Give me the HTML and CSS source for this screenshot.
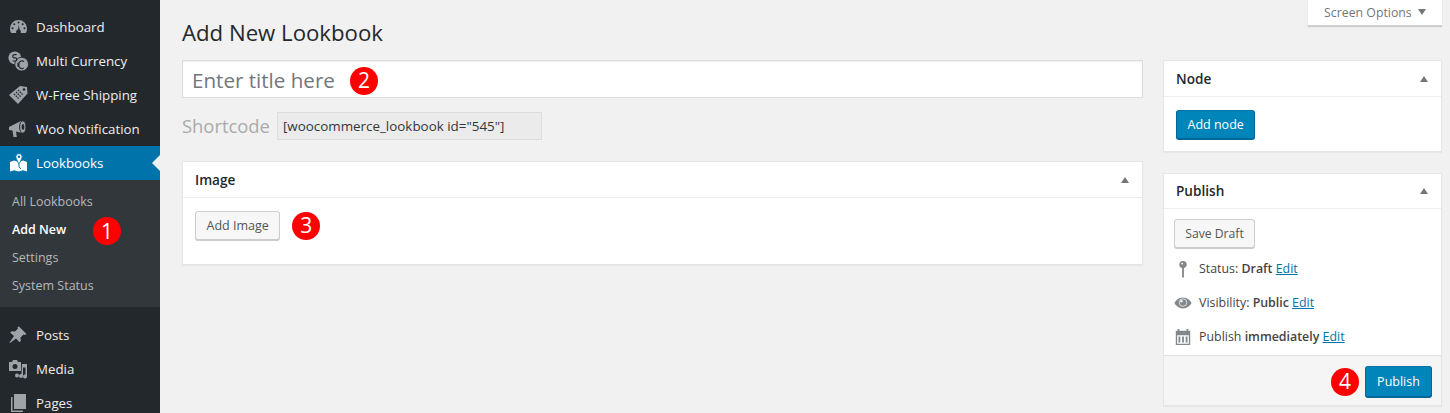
FILE: index.html
```html
<!DOCTYPE html>
<html lang="en">
<head>
    <meta charset="UTF-8">
    <title>Add New Lookbook</title>
    <link rel="stylesheet" href="styles.css">
</head>
<body>
    <div class="layout">
        <!-- Admin menu -->
        <nav class="sidebar">
            <ul class="menu">
                <li class="menu-item">
                    <svg class="menu-icon" viewBox="0 0 20 20"><path d="M10.500 3A8.500 8.500 0 0 0 2 11.500c0 1.700.4 3.200 1.200 4.500h14.600c.8-1.300 1.200-2.800 1.200-4.500A8.500 8.500 0 0 0 10.500 3z"/><g fill="#23282d"><circle cx="10.500" cy="5.500" r="1"/><circle cx="6.300" cy="7.200" r="1"/><circle cx="14.700" cy="7.200" r="1"/><circle cx="4.500" cy="11.300" r="1"/><circle cx="16.500" cy="11.300" r="1"/><circle cx="10.500" cy="14.500" r="2.200"/><path d="M10.800 7.500l1 7h-2z"/><path d="M8.300 14.500h4.400V16H8.300z"/></g></svg>
                    Dashboard
                </li>
                <li class="menu-item menu-item-wide">
                    <svg class="menu-icon menu-icon-wide" viewBox="0 0 24 24"><circle cx="8.500" cy="8.500" r="7"/><circle cx="16" cy="15.500" r="7.500" stroke="#23282d" stroke-width="1"/><path d="M18.500 12.500a3.500 3.500 0 0 0-5.500 2h-1v1h1v1h-1v1h1a3.500 3.500 0 0 0 5.500 2" fill="none" stroke="#23282d" stroke-width="1.300"/><path d="M10.500 5H8a1.500 1.500 0 0 0 0 3.500h1A1.500 1.500 0 0 1 9 12H6" fill="none" stroke="#23282d" stroke-width="1.300"/></svg>
                    Multi Currency
                </li>
                <li class="menu-item">
                    <svg class="menu-icon" viewBox="0 0 20 20"><path d="M12 1l7 1 .5 6.500-9.500 10.500L1 10z"/><path d="M6 9l5 5M8 7l5 5M10 5l5 5" stroke="#23282d" stroke-width="1.300" stroke-dasharray="1.500 1"/><circle cx="16" cy="4.500" r="1.300" fill="#23282d"/></svg>
                    W-Free Shipping
                </li>
                <li class="menu-item">
                    <svg class="menu-icon" viewBox="0 0 20 20"><path d="M1 8l12-6 1.500 12L8 12.500l.8 5.500H5.500l-1-6.500L1 11z"/><ellipse cx="14.800" cy="8" rx="3.200" ry="6.200" stroke="#23282d"/><ellipse cx="15" cy="8" rx="1.400" ry="3" fill="#23282d"/></svg>
                    Woo Notification
                </li>
                <li class="menu-item menu-item-current">
                    <svg class="menu-icon menu-icon-light" viewBox="0 0 20 20"><path d="M2 9l4-1.500 5 1.500 4-1.500 4 1.500v9.500l-4-1.200-4.500 1.200-4.500-1.200-4 1.200z"/><path d="M11 .5a3.200 3.200 0 0 0-3.200 3.200c0 2 3.200 7.300 3.200 7.300s3.200-5.300 3.200-7.300A3.200 3.200 0 0 0 11 .5z" stroke="#0073aa"/><circle cx="11" cy="3.700" r="1.200" fill="#0073aa"/><path d="M11 11v3l2 2" fill="none" stroke="#0073aa"/></svg>
                    Lookbooks
                </li>
                <li class="submenu-wrap">
                    <ul class="submenu">
                        <li class="submenu-item">All Lookbooks</li>
                        <li class="submenu-item submenu-item-current">Add New <span class="marker marker-menu">1</span></li>
                        <li class="submenu-item">Settings</li>
                        <li class="submenu-item">System Status</li>
                    </ul>
                </li>
                <li class="menu-item">
                    <svg class="menu-icon" viewBox="0 0 20 20"><path d="M11 1.500l7.500 7.500-1.500 1-1.500-.5-3 3 .3 3.500-1.300 1.300-3.500-3.800L2 18l-.5-.5 4.500-6.500-3.800-3.500L3.500 6.200l3.500.3 3-3L9.500 2z"/></svg>
                    Posts
                </li>
                <li class="menu-item">
                    <svg class="menu-icon" viewBox="0 0 20 20"><path d="M1 3h3l1-2h4l1 2h3v9H1zm6 2a2.500 2.500 0 1 0 0 5 2.500 2.500 0 0 0 0-5z" fill-rule="evenodd"/><path d="M14 5h5v12.500a2 2 0 1 1-1.500-2V8.500H15V17a2 2 0 1 1-1.500-2z"/><circle cx="9" cy="16.500" r="2"/></svg>
                    Media
                </li>
                <li class="menu-item">
                    <svg class="menu-icon" viewBox="0 0 20 20"><path d="M6 1h12v15H6z"/><path d="M3 4h1.500v13.500H15V19H3z"/></svg>
                    Pages
                </li>
            </ul>
        </nav>

        <main class="content">
            <button class="screen-options">Screen Options <span class="arrow-down"></span></button>
            <h1 class="page-title">Add New Lookbook</h1>

            <div class="columns">
                <div class="column-main">
                    <div class="title-field">
                        <span class="title-placeholder">Enter title here</span>
                        <span class="marker">2</span>
                    </div>
                    <div class="shortcode-row">
                        <span class="shortcode-label">Shortcode</span>
                        <div class="shortcode-input">[woocommerce_lookbook id="545"]</div>
                    </div>
                    <section class="box box-image">
                        <header class="box-header">
                            <h2 class="box-title">Image</h2>
                            <span class="arrow-up"></span>
                        </header>
                        <div class="box-body image-body">
                            <button class="button">Add Image</button>
                            <span class="marker">3</span>
                        </div>
                    </section>
                </div>

                <aside class="column-side">
                    <section class="box">
                        <header class="box-header">
                            <h2 class="box-title">Node</h2>
                            <span class="arrow-up"></span>
                        </header>
                        <div class="box-body node-body">
                            <button class="button button-primary">Add node</button>
                        </div>
                    </section>

                    <section class="box box-publish">
                        <header class="box-header">
                            <h2 class="box-title">Publish</h2>
                            <span class="arrow-up"></span>
                        </header>
                        <div class="publish-body">
                            <button class="button button-draft">Save Draft</button>
                            <div class="publish-row publish-row-first">
                                <svg class="publish-icon" viewBox="0 0 20 20"><path d="M10 1a4 4 0 0 0-1 7.900V19l1 1 1-1V8.900A4 4 0 0 0 10 1zM9 3a1 1 0 1 1 0 2 1 1 0 0 1 0-2z" fill-rule="evenodd"/></svg>
                                <span>Status: <b>Draft</b> <a class="edit-link">Edit</a></span>
                            </div>
                            <div class="publish-row">
                                <svg class="publish-icon publish-icon-eye" viewBox="0 0 20 20"><path d="M10 4C5.500 4 2 7.200.5 10 2 12.800 5.500 16 10 16s8-3.200 9.500-6C18 7.200 14.500 4 10 4z"/><circle cx="10" cy="9.500" r="4.200" fill="none" stroke="#fff" stroke-width=".8"/><circle cx="8.300" cy="8" r="1.300" fill="#fff"/></svg>
                                <span>Visibility: <b>Public</b> <a class="edit-link">Edit</a></span>
                            </div>
                            <div class="publish-row">
                                <svg class="publish-icon" viewBox="0 0 20 20"><path d="M2 3h2V1h2v2h8V1h2v2h2v16H2zm1.500 5v9.500h13V8zM5 9.500h2V16H5zm4 0h2V16H9zm4 0h2V16h-2z" fill-rule="evenodd"/></svg>
                                <span>Publish <b>immediately</b> <a class="edit-link">Edit</a></span>
                            </div>
                        </div>
                        <footer class="publish-footer">
                            <span class="marker">4</span>
                            <button class="button button-primary button-publish">Publish</button>
                        </footer>
                    </section>
                </aside>
            </div>
        </main>
    </div>
</body>
</html>
```

FILE: styles.css
```css
/* Reset */
* {
    margin: 0;
    padding: 0;
    box-sizing: border-box;
}

html, body {
    height: 413px;
    overflow: hidden;
}

body {
    font-family: "Open Sans", "Noto Sans", sans-serif;
    font-size: 13px;
    line-height: 1.4;
    color: #444;
    background-color: #f1f1f1;
}

.layout {
    display: flex;
    height: 413px;
}

/* Sidebar */
.sidebar {
    flex: 0 0 160px;
    background-color: #23282d;
    padding-top: 10px;
    overflow: hidden;
}

.menu, .submenu {
    list-style: none;
}

.menu-item {
    position: relative;
    display: flex;
    align-items: center;
    height: 34px;
    padding-left: 8px;
    gap: 8px;
    color: #eee;
    font-size: 13.300px;
}

.menu-item-wide {
    padding-left: 7px;
    gap: 7px;
}

.menu-icon {
    flex: 0 0 20px;
    width: 20px;
    height: 20px;
    fill: #9ea3a8;
}

.menu-icon-wide {
    flex-basis: 22px;
    width: 22px;
    height: 22px;
}

.menu-icon-light {
    fill: #fff;
}

.menu-item-current {
    background-color: #0073aa;
    color: #fff;
}

.menu-item-current::after {
    content: "";
    position: absolute;
    right: 0;
    top: 9px;
    border: 8px solid transparent;
    border-right-color: #f1f1f1;
}

.submenu-wrap {
    margin-bottom: 11px;
}

.submenu {
    background-color: #32373c;
    padding: 8px 0 0;
    height: 127px;
}

.submenu-item {
    position: relative;
    height: 28px;
    line-height: 28px;
    padding-left: 12px;
    font-size: 12.500px;
    color: #b4b9be;
}

.submenu-item-current {
    color: #fff;
    font-weight: 600;
}

/* Number markers on the screenshot */
.marker {
    display: inline-flex;
    align-items: center;
    justify-content: center;
    width: 28px;
    height: 28px;
    border-radius: 50%;
    background-color: #f00;
    color: #fff;
    font-size: 21px;
    font-weight: 500;
    line-height: 1;
}

.marker-menu {
    position: absolute;
    left: 93px;
    top: 1px;
}

/* Content */
.content {
    position: relative;
    flex: 1;
    padding-left: 22px;
}

.screen-options {
    position: absolute;
    top: 0;
    left: 1148px;
    width: 134px;
    height: 26px;
    font: inherit;
    font-size: 12.300px;
    color: #72777c;
    background-color: #fff;
    border: none;
    border-bottom: 1px solid #ccd0d4;
    box-shadow: 0 1px 1px rgba(0, 0, 0, 0.15);
}

.arrow-down {
    display: inline-block;
    margin-left: 3px;
    vertical-align: 2px;
    border: 4px solid transparent;
    border-top: 6px solid #72777c;
    border-bottom: none;
}

.arrow-up {
    border: 4px solid transparent;
    border-bottom: 6px solid #72777c;
    border-top: none;
}

.page-title {
    font-size: 22.200px;
    font-weight: 400;
    line-height: 29px;
    color: #23282d;
    padding-top: 18px;
    height: 60px;
}

.columns {
    display: flex;
    gap: 20px;
}

.column-main {
    flex: 0 0 961px;
}

.column-side {
    flex: 0 0 279px;
}

.title-field {
    display: flex;
    align-items: center;
    gap: 15px;
    height: 38px;
    padding: 3px 0 0 9px;
    background-color: #fff;
    border: 1px solid #ddd;
    box-shadow: inset 0 1px 2px rgba(0, 0, 0, 0.07);
}

.title-placeholder {
    font-size: 20.600px;
    color: #72777c;
}

.shortcode-row {
    display: flex;
    align-items: center;
    gap: 7px;
    height: 28px;
    margin-top: 14px;
}

.shortcode-label {
    font-size: 18.400px;
    color: #aaa;
}

.shortcode-input {
    width: 265px;
    height: 28px;
    line-height: 27px;
    padding-left: 5px;
    font-size: 13.400px;
    color: #32373c;
    background-color: #ebebeb;
    border: 1px solid #ddd;
}

/* Boxes */
.box {
    background-color: #fff;
    border: 1px solid #e5e5e5;
    box-shadow: 0 1px 1px rgba(0, 0, 0, 0.04);
}

.box-image {
    margin-top: 21px;
    height: 104px;
}

.box-header {
    display: flex;
    align-items: center;
    justify-content: space-between;
    height: 36px;
    padding: 0 13px 0 12px;
    border-bottom: 1px solid #eee;
}

.box-title {
    font-size: 13.600px;
    font-weight: 600;
    color: #23282d;
}

.box-body {
    padding: 13px 12px;
}

.image-body {
    display: flex;
    align-items: center;
    gap: 12px;
}

.node-body {
    height: 54px;
}

.button {
    height: 29px;
    padding: 0 10.500px;
    font: inherit;
    font-size: 12.500px;
    color: #555;
    background-color: #f7f7f7;
    border: 1px solid #ccc;
    border-radius: 3px;
    box-shadow: 0 1px 0 #ccc;
}

.button-draft {
    font-size: 12.200px;
    width: 81px;
    padding: 0;
}

.button-primary {
    color: #fff;
    background-color: #0085ba;
    border-color: #0073aa #006799 #006799;
    box-shadow: 0 1px 0 #006799;
}

.button-publish {
    height: 31px;
    width: 67px;
    padding: 0;
}

.box-publish {
    margin-top: 21px;
}

.box-publish .box-header {
    height: 35px;
}

.publish-body {
    height: 146px;
    padding: 10px 10px 0;
}

.publish-row {
    display: flex;
    align-items: center;
    gap: 7px;
    height: 34px;
    font-size: 12.400px;
    color: #444;
}

.publish-row-first {
    margin-top: 4px;
}

.publish-row b {
    font-weight: 600;
}

.publish-icon {
    flex: 0 0 18px;
    width: 18px;
    height: 18px;
    fill: #82878c;
}

.edit-link {
    color: #0073aa;
    text-decoration: underline;
}

.publish-footer {
    display: flex;
    align-items: center;
    justify-content: flex-end;
    gap: 6px;
    height: 50px;
    padding: 2px 9px 0 0;
    background-color: #f5f5f5;
    border-top: 1px solid #ddd;
}
```
